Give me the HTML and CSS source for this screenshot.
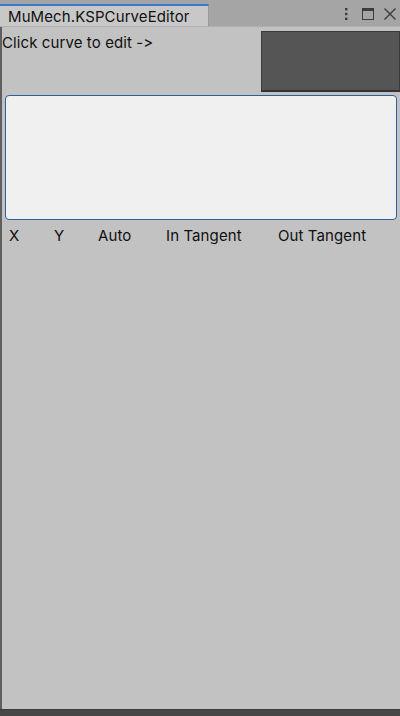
FILE: index.html
```html
<!DOCTYPE html>
<html>
<head>
<meta charset="utf-8">
<link rel="stylesheet" href="styles.css">
</head>
<body>
<div class="window">
  <div class="tabbar">
    <div class="tab">MuMech.KSPCurveEditor</div>
    <div class="tools">
      <svg class="ico kebab" width="6" height="14" viewBox="0 0 6 14"><rect x="2" y="1" width="2.4" height="2.4" fill="#3c3c3c"/><rect x="2" y="5.8" width="2.4" height="2.4" fill="#3c3c3c"/><rect x="2" y="10.6" width="2.4" height="2.4" fill="#3c3c3c"/></svg>
      <svg class="ico max" width="14" height="14" viewBox="0 0 14 14"><rect x="1.5" y="1.5" width="11" height="11" fill="none" stroke="#3c3c3c"/><rect x="1" y="1" width="12" height="3" fill="#3c3c3c"/></svg>
      <svg class="ico close" width="14" height="14" viewBox="0 0 14 14"><path d="M1.5 1.5 L12.5 12.5 M12.5 1.5 L1.5 12.5" stroke="#3c3c3c" stroke-width="1.4" fill="none"/></svg>
    </div>
  </div>
  <div class="content">
    <div class="toprow">
      <div class="hint">Click curve to edit -&gt;</div>
      <div class="preview"></div>
    </div>
    <div class="textarea"></div>
    <div class="labels">
      <span class="l-x">X</span>
      <span class="l-y">Y</span>
      <span class="l-auto">Auto</span>
      <span class="l-in">In Tangent</span>
      <span class="l-out">Out Tangent</span>
    </div>
  </div>
  <div class="bottom"></div>
</div>
</body>
</html>
```
FILE: styles.css
```css
html, body {
  margin: 0;
  padding: 0;
  width: 400px;
  height: 716px;
  overflow: hidden;
  font-family: Inter, "Noto Sans", sans-serif;
  font-variant-ligatures: none;
  font-feature-settings: "calt" 0, "liga" 0;
  color: #101010;
}
.window {
  display: flex;
  flex-direction: column;
  height: 716px;
  background: #c2c2c2;
}
.tabbar {
  height: 27px;
  background: #a5a5a5;
  display: flex;
  align-items: flex-end;
  border-bottom: 1px solid #b0b0b0;
  box-sizing: border-box;
}
.tab {
  width: 209px;
  height: 22px;
  box-sizing: border-box;
  background: #c8c8c8;
  border-top: 2px solid #3a7ad0;
  border-right: 1px solid #999;
  font-size: 15px;
  line-height: 21px;
  padding-left: 8px;
  color: #111;
  letter-spacing: 0.1px;
}
.tools {
  margin-left: auto;
  display: flex;
  align-items: center;
  height: 27px;
  padding-right: 3px;
  align-self: flex-start;
}
.ico { display: block; }
.max { margin-left: 12px; }
.close { margin-left: 8px; }
.content {
  flex: 1;
  display: flex;
  flex-direction: column;
  border-left: 2px solid #5f5f5f;
}
.toprow {
  display: flex;
  justify-content: space-between;
  align-items: flex-start;
  padding-top: 4px;
}
.hint {
  font-size: 15px;
  line-height: 18px;
  margin-top: 3px;
  letter-spacing: 0.1px;
}
.preview {
  width: 139px;
  height: 61px;
  box-sizing: border-box;
  background: #555555;
  border: 1px solid #3a3a3a;
  border-bottom: 2px solid #333;
}
.textarea {
  margin: 3px 3px 0 3px;
  height: 125px;
  box-sizing: border-box;
  background: #f0f0f0;
  border: 1px solid #2d5f9e;
  border-radius: 4px;
}
.labels {
  position: relative;
  height: 22px;
  font-size: 15px;
  line-height: 22px;
  margin-top: 5px;
  letter-spacing: 0.1px;
}
.labels span { position: absolute; top: 0; }
.l-x { left: 7px; }
.l-y { left: 52px; }
.l-auto { left: 96px; }
.l-in { left: 164px; }
.l-out { left: 276px; }
.bottom {
  height: 6px;
  background: #474747;
  border-top: 1px solid #3a3a3a;
}
```
